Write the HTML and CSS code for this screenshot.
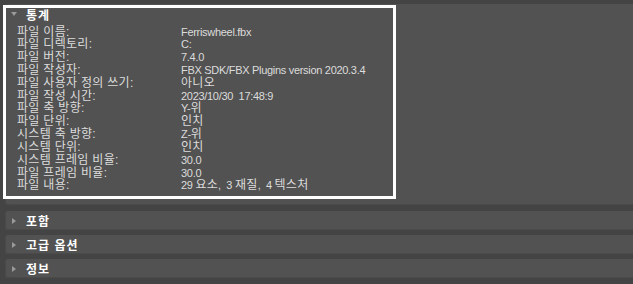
FILE: index.html
```html
<!DOCTYPE html>
<html lang="ko">

<head>
    <meta charset="UTF-8">
    <meta name="viewport" content="width=device-width, initial-scale=1.0">
    <title>통계</title>
    <link rel="stylesheet" href="styles.css">
</head>

<body>
    <div class="rollout open">
        <div class="rollout-head">
            <span class="arrow down"></span>
            <span class="title">통계</span>
        </div>
        <div class="stats">
            <span class="label">파일 이름:</span><span class="value">Ferriswheel.fbx</span>
            <span class="label">파일 디렉토리:</span><span class="value">C:</span>
            <span class="label">파일 버전:</span><span class="value">7.4.0</span>
            <span class="label">파일 작성자:</span><span class="value">FBX SDK/FBX Plugins version 2020.3.4</span>
            <span class="label">파일 사용자 정의 쓰기:</span><span class="value"><span class="ko">아니오</span></span>
            <span class="label">파일 작성 시간:</span><span class="value">2023/10/30&nbsp; 17:48:9</span>
            <span class="label">파일 축 방향:</span><span class="value">Y-<span class="ko">위</span></span>
            <span class="label">파일 단위:</span><span class="value"><span class="ko">인치</span></span>
            <span class="label">시스템 축 방향:</span><span class="value">Z-<span class="ko">위</span></span>
            <span class="label">시스템 단위:</span><span class="value"><span class="ko">인치</span></span>
            <span class="label">시스템 프레임 비율:</span><span class="value">30.0</span>
            <span class="label">파일 프레임 비율:</span><span class="value">30.0</span>
            <span class="label">파일 내용:</span><span class="value">29 <span class="ko">요소</span>,&nbsp; 3 <span class="ko">재질</span>,&nbsp; 4 <span class="ko">텍스처</span></span>
        </div>
        <div class="highlight"></div>
    </div>

    <div class="rollout">
        <div class="rollout-head">
            <span class="arrow right"></span>
            <span class="title">포함</span>
        </div>
    </div>
    <div class="rollout">
        <div class="rollout-head">
            <span class="arrow right"></span>
            <span class="title">고급 옵션</span>
        </div>
    </div>
    <div class="rollout">
        <div class="rollout-head">
            <span class="arrow right"></span>
            <span class="title">정보</span>
        </div>
    </div>
</body>

</html>
```

FILE: styles.css
```css
body {
    margin: 0;
    padding: 4px 0 0 5px;
    background: #444444;
    font-family: "Liberation Sans", "Noto Sans CJK KR", sans-serif;
    font-size: 11px;
    color: #dcdcdc;
    height: 280px;
    overflow: hidden;
}

.rollout {
    position: relative;
    background: #525252;
    border-radius: 3px 0 0 3px;
    box-shadow: inset 1px 0 0 #4a4a4a, inset 0 -1px 0 #4a4a4a;
    height: 19px;
    margin-top: 5px;
}

.rollout.open {
    height: 201px;
    margin-top: 0;
    margin-bottom: 6px;
}

.rollout-head {
    display: flex;
    align-items: center;
    height: 19px;
}

.rollout.open .rollout-head {
    height: 20px;
}

.arrow {
    width: 0;
    height: 0;
    border-style: solid;
    border-color: transparent;
}

.arrow.down {
    border-width: 4px 3px 0 3px;
    border-top-color: #9a9a9a;
    margin-left: 6px;
    margin-right: 9px;
}

.arrow.right {
    border-width: 3px 0 3px 4px;
    border-left-color: #9a9a9a;
    margin-left: 7px;
    margin-right: 10px;
}

.title {
    font-weight: bold;
    font-size: 12px;
    color: #ffffff;
    letter-spacing: 1px;
}

.stats {
    display: grid;
    grid-template-columns: 164px auto;
    grid-auto-rows: 12.83px;
    align-items: baseline;
    line-height: 12px;
    padding: 1.5px 0 0 12px;
    white-space: nowrap;
}

.label {
    font-size: 12px;
    letter-spacing: 0.3px;
}

.value {
    letter-spacing: -0.3px;
}

.ko {
    font-size: 12px;
    letter-spacing: 0.3px;
}

.highlight {
    position: absolute;
    left: -2px;
    top: 1px;
    width: 387px;
    height: 188px;
    border: 3px solid #ffffff;
}
```
